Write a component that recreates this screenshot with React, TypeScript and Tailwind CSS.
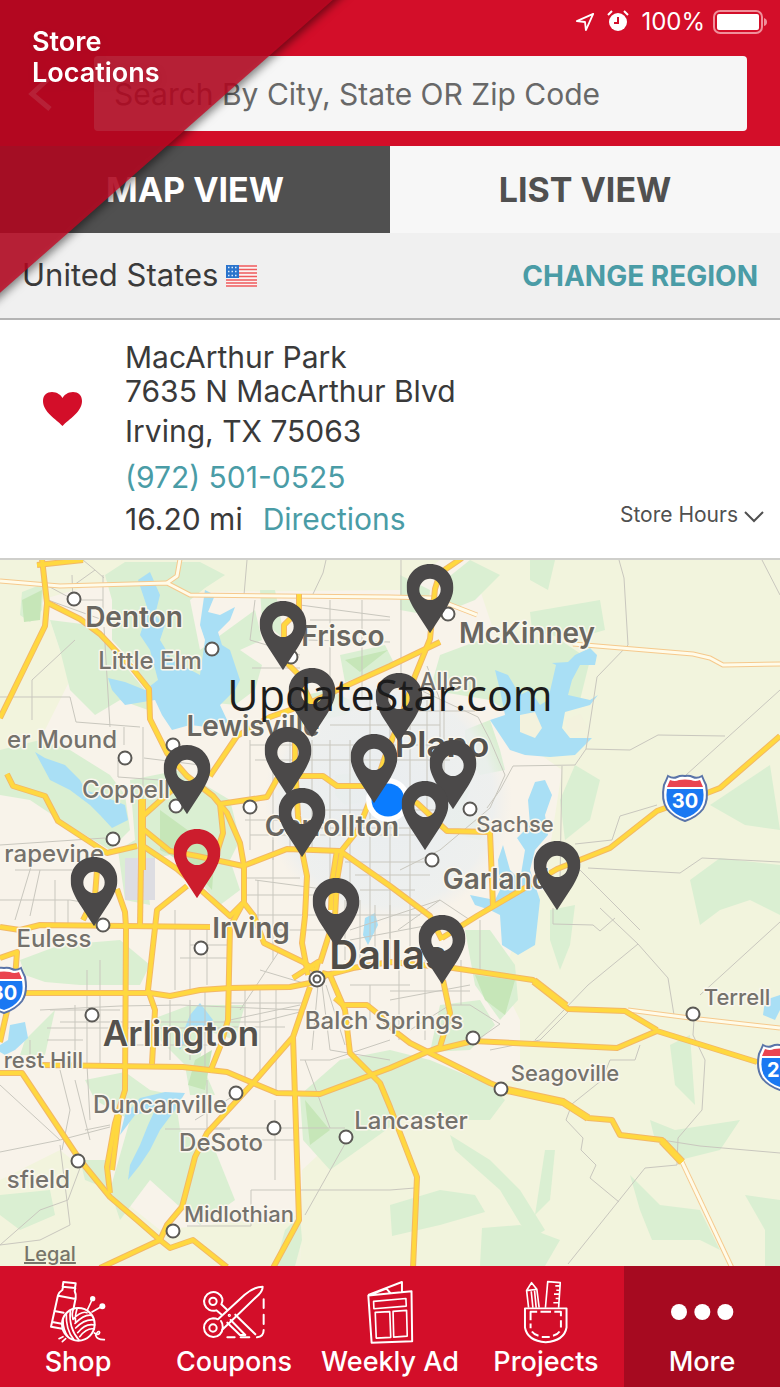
import React from "react";

type Point = [number, number];

/* Map drawing coordinates: x 0..780, y 560..1266 */
const MAP = { x: 0, y: 560, w: 780, h: 706 };

const freeways: string[] = [
  "M42 559 L47 603 L45 626 L0 718",
  "M37 565 L83 560",
  "M48 603 L80 619 L100 634 L133 669 L149 689 L150 719 L167 753 L187 776 L213 796 L227 813 L240 843 L244 866 L244 903 L254 916 L264 943 L303 962 L317 972",
  "M220 804 L223 833 L217 852",
  "M299 594 L299 610 L284 625 L284 660 L297 673 L310 700 L295 740 L295 763 L298 816 L303 856 L307 876 L305 916 L302 943 L308 975",
  "M440 642 L390 666 L350 684 L310 703 L270 717 L237 736 L210 776",
  "M172 790 L143 816 L141 839",
  "M7 774 L13 786 L45 796 L58 821 L107 853 L137 846",
  "M142 799 L140 927",
  "M143 829 L170 851 L197 856 L243 866 L287 849 L340 851 L390 886 L430 916 L442 940",
  "M143 846 L177 869 L193 883 L230 916 L243 903",
  "M187 886 L157 910 L148 990 L155 1010 L152 1064",
  "M243 903 L230 927 L228 1020 L220 1047 L210 1072",
  "M97 870 L95 896 L83 920",
  "M117 889 L125 912 L126 927 L125 1090 L115 1123 L107 1167 L110 1193",
  "M119 1115 L112 1170",
  "M0 927 L20 930 L40 925 L210 927",
  "M0 958 L17 952 L15 978",
  "M7 1011 L0 1042",
  "M24 993 L150 993 L170 996 L200 990 L230 988 L290 987 L310 983 L327 975 L353 968 L390 962 L453 968 L533 980 L568 1009 L625 1011 L657 1030",
  "M40 1065 L183 1067 L227 1072 L253 1083 L277 1093 L320 1094 L390 1068 L427 1052 L473 1041 L617 1048 L657 1031 L757 1062",
  "M0 1073 L22 1073 L80 1160 L110 1197 L137 1220 L160 1240 L170 1248 L193 1240 L227 1267",
  "M160 1240 L100 1268",
  "M310 987 L293 1037 L253 1083 L207 1133 L195 1157 L182 1207 L167 1225 L160 1240",
  "M293 1037 L295 1097 L299 1220 L273 1268",
  "M322 973 L330 975 L345 1010 L350 1053 L380 1083 L390 1107 L417 1177 L413 1268",
  "M335 998 L343 1005 L367 1005 L377 1013 L397 1033 L410 1043 L430 1053 L490 1083 L507 1090 L563 1102 L588 1118 L612 1120 L620 1135 L662 1140 L682 1162",
  "M442 938 L477 916 L523 889 L557 869 L610 848 L657 811 L707 793 L720 788 L780 736",
  "M443 980 L450 1013 L440 1047 L427 1052",
  "M462 558 L440 573 L435 589 L430 639 L415 676 L400 720 L385 757 L374 790 L358 830 L342 850 L337 880 L335 916 L320 963",
  "M337 850 L332 882 L331 910",
  "M220 804 L267 797 L277 779 L300 776 L323 776 L337 786 L377 786 L417 803 L447 831 L490 832 L493 906",
  "M293 978 L318 962 L312 985",
];

const wideStretches: string[] = [
  "M507 1090 L563 1102 L588 1118",
  "M662 1141 L682 1162",
  "M534 981 L566 1006",
  "M142 799 V870",
];

const highways: string[] = [
  "M0 581 L60 586 L167 583 L190 595 L390 597 L433 598 L477 615",
  "M180 559 L177 576 L167 583",
  "M573 644 L693 654 L710 658 L723 665 L780 664",
  "M628 1010 L690 1018 L780 1028",
  "M682 1162 L732 1268",
];

const streets: string[] = [
  "M48 600 L103 620 M72 575 L73 605 M103 575 V612 M48 586 L74 600 L103 600 M104 627 L110 727 M74 585 L95 570 L83 560",
  "M0 697 L70 697 L76 722 L140 727 M95 570 L104 578 M32 720 L32 680 L75 640",
  "M247 560 L244 595 M326 560 L323 573 L313 594 M362 600 V700 M300 605 L390 617 M255 600 L250 640 L300 655 M310 620 H390 M330 600 V690 M305 640 L390 642 M252 668 L300 668 M401 560 V680",
  "M143 727 V800 M124 727 V745 M118 777 L160 780 M144 758 L200 765 M118 760 V777",
  "M250 740 V850 M273 740 V860 M290 740 V850 M312 740 V850 M330 740 V890 M350 740 V900 M370 700 V940 M390 700 V940 M410 700 V930 M427 700 V840 M444 700 V810 M250 745 H430 M255 760 H450 M330 725 H440 M313 810 H440 M318 828 H430 M245 820 H320 M250 835 H420 M345 862 H440 M355 875 H430 M360 890 H415",
  "M390 711 L475 711 M420 690 L478 717 L490 740 L505 775 L490 808 L440 850 L400 870 M427 666 L440 700 V740",
  "M0 845 L105 838 M15 870 H90 M33 860 L15 920 M68 900 V925 M0 900 H70 L100 905 M40 870 L30 916 M55 880 V925",
  "M175 910 V990 M190 930 V990 M207 926 V985 M273 840 V960 M258 880 V930 M245 895 H330 M250 915 H320 M255 880 L330 890 M245 878 H300 M265 930 H325 M180 958 H228 M190 945 H228",
  "M330 915 H420 M345 900 V960 M360 900 V960 M375 905 V960 M390 905 V960 M410 910 V960 M350 940 L430 925 M350 930 L440 900 M398 930 L440 900 L470 920",
  "M87 970 V1065 M75 1005 V1065 M100 960 V1065 M47 1028 H120 M47 1040 H83 M30 1040 V1065 M50 1010 H120 M60 1022 H260 L300 1012 M40 1010 L120 1006 L180 1005 L300 1010 M125 1028 H230 M125 1045 H220 M170 1000 V1060 M190 1000 V1060 M205 990 V1070",
  "M245 990 V1080 M260 990 V1078 M276 990 V1095 M230 1003 H305 M230 1027 H285 M230 1020 L300 1005 M240 1010 L280 950 M260 970 L310 985 M318 985 L312 1050 M322 985 L330 1050 M326 985 L345 1045 M300 1060 L330 1060 L390 1040 M330 1050 L390 1060",
  "M399 960 V1040 M425 960 V1040 M461 960 V1005 M390 991 H470 M390 1000 L470 985 M480 920 V970 M350 985 H410 M370 985 V1020 M410 1030 L450 1005 H470 L500 1024 L470 1045",
  "M60 1145 L70 1225 L40 1240 L0 1245 M60 1070 L70 1110 L62 1150 M75 1080 L90 1140 M0 1085 L60 1140 M110 1125 L85 1130 M87 1065 L90 1120 M165 1129 H230 M207 1080 V1130 M275 1100 V1180 M207 1128 H345 M195 1120 L235 1095 M240 1140 H295 M305 1060 L330 1128 M346 1142 L305 1215 M251 1226 V1190 H390 L415 1188 M187 1226 H251",
  "M80 1168 L68 1200 L40 1210 L0 1245 M0 1152 L60 1140 L110 1127",
  "M619 560 L624 578 L628 645 L597 677 L586 749 L575 765 L513 766 L500 790 L487 808 M586 749 L630 750 L658 735 L725 736 M780 690 L686 775 M657 805 L620 816 L612 840 L575 844 M562 766 L560 880 M588 868 L680 873 L702 858 L780 862 M762 560 L780 595",
  "M600 908 L638 944 L668 978 L674 1015 M553 908 V924 L593 925 L600 931 L615 918 M638 944 L588 985 L535 1040 M780 922 L700 995 M580 870 L640 930",
  "M694 1020 L693 1035 L705 1060 L702 1110 L678 1138 L677 1165 L645 1168 L568 1264 M640 1045 L635 1060 L610 1060 L602 1080 L572 1104 L566 1120 L583 1138 L581 1150 L596 1165 L590 1178 L619 1202 M662 1140 L700 1146 L780 1153",
  "M490 1050 L540 1040 L570 1010",
];

const rural: string[] = [
  "M470 560 H780 V1266 H300 L302 1170 L345 1130 L420 1090 L520 1080 L520 1020 L500 980 L520 930 L545 880 L562 770 L520 740 L500 650 Z",
  "M0 560 H440 L400 590 L190 592 L110 580 L40 600 L50 620 L70 680 L30 760 L0 780 Z",
  "M0 1180 L60 1150 L110 1190 L160 1230 L300 1215 L300 1266 H0 Z",
];

const woods: string[] = [
  "M45 560 L42 610 L30 622 L20 615 L22 592 L40 585 Z",
  "M50 620 L90 625 L120 660 L145 690 L148 710 L120 700 L95 715 L70 690 L60 650 Z",
  "M105 575 L125 562 L200 562 L225 575 L205 588 L190 600 L200 650 L255 610 L262 640 L240 650 L262 665 L255 690 L235 705 L190 700 L150 692 L135 665 L112 640 L112 600 Z",
  "M0 750 L40 740 L70 750 L110 775 L125 795 L130 830 L110 850 L60 820 L30 800 L0 795 Z",
  "M130 780 L180 770 L230 800 L240 840 L230 860 L240 890 L220 905 L190 870 L170 855 L145 860 L150 905 L125 900 L118 850 L135 840 Z",
  "M260 590 L275 590 L285 640 L262 620 Z",
  "M340 655 L385 645 L395 665 L345 682 Z",
  "M305 695 L330 690 L360 705 L345 715 L320 720 Z",
  "M400 575 L430 590 L428 615 L400 610 Z",
  "M440 655 L480 640 L560 640 L590 660 L580 700 L520 720 L490 700 L430 690 Z",
  "M470 560 L500 575 L475 600 L450 610 L445 580 Z",
  "M530 560 H555 L548 590 L530 580 Z",
  "M530 612 L600 600 L605 630 L570 640 L532 630 Z",
  "M575 765 L600 780 L590 820 L565 840 L560 800 Z",
  "M465 730 L490 720 L500 750 L505 770 L480 775 L465 755 Z",
  "M440 780 L470 790 L460 815 L490 825 L480 840 L440 830 Z",
  "M335 775 L385 770 L380 800 L345 805 L335 795 Z",
  "M20 960 L60 945 L120 940 L150 965 L140 985 L80 985 L45 982 L25 975 Z",
  "M150 1020 L190 1005 L245 1005 L235 1040 L205 1030 L200 1060 L215 1095 L190 1095 L185 1065 L160 1040 Z",
  "M85 1080 L125 1072 L150 1090 L175 1095 L180 1130 L215 1150 L235 1200 L200 1225 L150 1180 L120 1220 L110 1190 L130 1120 L95 1100 Z",
  "M300 1095 L340 1060 L390 1050 L430 1060 L490 1085 L505 1100 L490 1120 L400 1120 L330 1170 L303 1140 Z",
  "M465 930 L490 930 L515 965 L518 1000 L500 1020 L475 985 Z",
  "M440 1005 L480 1000 L495 1025 L470 1050 L430 1052 Z",
  "M25 1040 L55 1010 L45 1055 L20 1055 Z",
  "M0 1195 L50 1190 L55 1215 L20 1230 L0 1215 Z",
  "M80 1160 L105 1160 L110 1190 L85 1180 Z",
  "M550 910 L575 905 L570 945 L560 970 L550 940 Z",
  "M710 805 L770 765 L780 830 L745 825 Z",
  "M690 880 L720 858 L780 865 V915 L750 900 L720 910 L700 925 Z",
  "M670 1045 L690 1035 L695 1105 L675 1085 Z",
  "M650 1120 L675 1130 L740 1120 L720 1150 L680 1160 L655 1140 Z",
  "M390 1205 L440 1190 L475 1195 L485 1212 L440 1225 L392 1236 Z",
  "M482 1228 L520 1225 L560 1240 L545 1266 H480 Z",
  "M450 1135 L490 1160 L520 1190 L545 1230 L530 1240 L500 1190 L455 1150 Z",
  "M630 1175 L660 1205 L700 1210 L720 1250 L700 1240 H652 L640 1210 Z",
  "M745 1195 L780 1200 V1266 H765 L765 1230 Z",
  "M285 1230 L300 1215 L302 1240 L295 1266 H275 Z",
  "M545 1150 L555 1150 L550 1200 L535 1215 Z",
];

const lakes: string[] = [
  "M138 580 L150 572 L160 595 L155 615 L165 625 L160 640 L172 660 L200 675 L205 640 L200 625 L205 590 L215 595 L208 612 L220 615 L235 607 L230 620 L218 632 L222 645 L230 650 L240 680 L235 690 L220 705 L228 722 L215 728 L190 725 L172 730 L162 715 L155 700 L125 705 L112 690 L108 678 L125 682 L145 690 L158 680 L150 650 L140 635 L148 610 Z",
  "M35 752 L45 758 L65 765 L80 780 L85 790 L105 797 L125 805 L128 820 L112 828 L100 815 L90 805 L70 790 L50 780 Z",
  "M495 670 L508 675 L520 695 L530 690 L540 705 L548 700 L556 665 L552 663 L568 662 L575 655 L590 648 L597 655 L595 665 L580 665 L572 680 L568 695 L590 700 L598 695 L590 705 L565 712 L562 728 L570 738 L592 738 L575 755 L550 757 L525 755 L510 750 L500 735 L490 720 L505 715 L500 690 Z",
  "M535 782 L545 780 L552 795 L545 815 L548 835 L535 850 L530 870 L540 900 L535 945 L518 955 L502 945 L500 915 L490 910 L475 905 L470 895 L495 900 L500 890 L498 860 L503 845 L510 870 L520 880 L525 850 L517 838 L530 825 L528 800 Z",
  "M10 1025 L25 1022 L28 1038 L15 1050 L5 1055 L0 1052 V1045 L8 1040 Z",
  "M190 1015 L200 1003 L213 1020 L205 1030 L195 1025 L180 1050 L178 1045 Z",
  "M140 1098 L165 1092 L185 1093 L175 1110 L160 1130 L150 1150 L140 1165 L128 1180 L130 1165 L140 1145 L148 1125 L155 1110 L135 1115 L120 1135 L125 1115 Z",
  "M365 918 L375 913 L378 925 L368 945 L363 935 Z",
  "M765 1000 L780 995 V1010 L775 1020 L763 1015 Z",
];

const towns: Point[] = [
  [74, 599], [212, 649], [448, 614], [125, 758], [173, 745], [176, 806], [250, 807], [470, 809],
  [113, 839], [432, 860], [103, 925], [201, 948], [92, 1015], [473, 1038], [501, 1089], [236, 1093],
  [274, 1128], [346, 1137], [78, 1161], [173, 1231], [693, 1014], [291, 657],
];

type Label = { t: string; x: number; y: number; s: "xl" | "lg" | "ml" | "md" | "sm"; end?: boolean };

const labels: Label[] = [
  { t: "Denton", x: 134, y: 627, s: "ml" },
  { t: "Frisco", x: 343, y: 646, s: "ml" },
  { t: "McKinney", x: 527, y: 643, s: "ml" },
  { t: "Little Elm", x: 150, y: 669, s: "md" },
  { t: "Allen", x: 448, y: 690, s: "md" },
  { t: "Lewisville", x: 253, y: 736, s: "ml" },
  { t: "er Mound", x: 117, y: 748, s: "md", end: true },
  { t: "Plano", x: 442, y: 757, s: "lg" },
  { t: "Coppell", x: 126, y: 798, s: "md" },
  { t: "Carrollton", x: 332, y: 836, s: "ml" },
  { t: "Sachse", x: 515, y: 832, s: "sm" },
  { t: "rapevine", x: 104, y: 862, s: "md", end: true },
  { t: "Garland", x: 496, y: 889, s: "ml" },
  { t: "Irving", x: 251, y: 938, s: "ml" },
  { t: "Euless", x: 54, y: 947, s: "md" },
  { t: "Dallas", x: 388, y: 969, s: "xl" },
  { t: "Arlington", x: 181, y: 1046, s: "lg" },
  { t: "Balch Springs", x: 384, y: 1029, s: "md" },
  { t: "rest Hill", x: 83, y: 1068, s: "sm", end: true },
  { t: "Terrell", x: 737, y: 1005, s: "sm" },
  { t: "Seagoville", x: 565, y: 1081, s: "sm" },
  { t: "Duncanville", x: 160, y: 1113, s: "md" },
  { t: "Lancaster", x: 411, y: 1129, s: "md" },
  { t: "DeSoto", x: 221, y: 1151, s: "md" },
  { t: "sfield", x: 70, y: 1188, s: "md", end: true },
  { t: "Midlothian", x: 239, y: 1222, s: "sm" },
];

const labelClass: Record<Label["s"], string> = {
  xl: "fill-[#4f4c47] text-[40px] font-semibold",
  lg: "fill-[#55524d] text-[35px] font-semibold",
  ml: "fill-[#696660] text-[28px] font-semibold",
  md: "fill-[#75726c] text-[24px] font-medium",
  sm: "fill-[#75726c] text-[22px] font-medium",
};

/* Pin tops, listed back to front */
const pins: { x: number; y: number; mine?: boolean }[] = [
  { x: 430, y: 564 }, { x: 283, y: 601 }, { x: 312, y: 668 }, { x: 399, y: 673 },
  { x: 288, y: 727 }, { x: 374, y: 734 }, { x: 453, y: 740 }, { x: 187, y: 745 },
  { x: 425, y: 781 }, { x: 302, y: 788 }, { x: 197, y: 829, mine: true }, { x: 557, y: 841 },
  { x: 94, y: 857 }, { x: 336, y: 878 }, { x: 442, y: 915 },
];

function Shield({ x, y, n }: { x: number; y: number; n: string }) {
  return (
    <g transform={`translate(${x} ${y})`}>
      <path d="M-17 -22 Q-12 -19 -8 -21 Q-4 -23 0 -22 Q4 -23 8 -21 Q12 -19 17 -22 Q19 -17 21 -13 Q24 2 18 11 Q12 19 0 23 Q-12 19 -18 11 Q-24 2 -21 -13 Q-19 -17 -17 -22 Z" fill="#fff" stroke="#5a74a8" strokeWidth="2" />
      <path d="M-18 -9 H18 Q20 3 15 10 Q10 17 0 20 Q-10 17 -15 10 Q-20 3 -18 -9 Z" fill="#1a78f2" />
      <path d="M-15 -18 Q-10 -16 -6 -18 Q0 -19 6 -18 Q10 -16 15 -18 L18 -11 H-18 Z" fill="#ea4450" />
      <text x="0" y="10" textAnchor="middle" className="fill-white text-[20px] font-bold">{n}</text>
    </g>
  );
}

function MapCanvas() {
  return (
    <svg viewBox={`${MAP.x} ${MAP.y} ${MAP.w} ${MAP.h}`} className="block w-full bg-[#f8f3ea]" role="img" aria-label="Map of stores around Dallas">
      <defs>
        <radialGradient id="halo">
          <stop offset="0" stopColor="#e9edf0" />
          <stop offset="0.85" stopColor="#ecefef" stopOpacity="0.85" />
          <stop offset="1" stopColor="#eeeeec" stopOpacity="0" />
        </radialGradient>
      </defs>
      <g fill="#f2f4dd">{rural.map((d) => <path key={d} d={d} />)}</g>
      <g fill="#daefd2">{woods.map((d) => <path key={d} d={d} />)}</g>
      <g fill="#c6e6b8">
        <path d="M22 600 L42 590 L40 620 L24 622 Z M160 810 L215 850 L212 890 L190 865 L160 850 Z M345 660 L388 650 L360 672 Z M195 1060 L212 1050 L205 1090 L188 1085 Z M475 975 L515 980 L505 1015 L485 1000 Z M305 1100 L330 1130 L310 1145 Z" />
      </g>
      <path d="M125 858 H155 V900 H125 Z" fill="#dddde2" />
      <circle cx="388" cy="800" r="124" fill="url(#halo)" />
      <g fill="#a9dff5">{lakes.map((d) => <path key={d} d={d} />)}</g>
      <g fill="#f3f2dd">
        <path d="M520 715 L535 712 L542 728 L535 738 L520 732 Z M565 720 L580 714 L588 728 L568 735 Z" />
      </g>
      <g fill="none" stroke="#c9c7be" strokeWidth="1">{streets.map((d) => <path key={d} d={d} />)}</g>
      <g fill="none" strokeLinejoin="round">
        <g stroke="#f6c98c" strokeWidth="5">{highways.map((d) => <path key={d} d={d} />)}</g>
        <g stroke="#fffbe9" strokeWidth="3">{highways.map((d) => <path key={d} d={d} />)}</g>
        <g stroke="#f3b866" strokeWidth="6">{freeways.map((d) => <path key={d} d={d} />)}</g>
        <g stroke="#f3b866" strokeWidth="8">{wideStretches.map((d) => <path key={d} d={d} />)}</g>
        <g stroke="#ffd83f" strokeWidth="6">{wideStretches.map((d) => <path key={d} d={d} />)}</g>
        <g stroke="#ffd83f" strokeWidth="4">{freeways.map((d) => <path key={d} d={d} />)}</g>
      </g>
      <Shield x={685} y={798} n="30" />
      <Shield x={4} y={990} n="30" />
      <Shield x={780} y={1067} n="20" />
      <g fill="#fff" stroke="#5b5955" strokeWidth="2">
        {towns.map(([x, y]) => <circle key={`${x}-${y}`} cx={x} cy={y} r="6.500" />)}
        <circle cx="317" cy="979" r="7.500" />
        <circle cx="317" cy="979" r="3.500" />
      </g>
      <g className="[paint-order:stroke] stroke-[#faf7ee] stroke-3 [stroke-linejoin:round]">
        {labels.map((l) => (
          <text key={l.t} x={l.x} y={l.y} textAnchor={l.end ? "end" : "middle"} className={labelClass[l.s]}>{l.t}</text>
        ))}
      </g>
      <circle cx="388" cy="800" r="22" fill="#fff" />
      <circle cx="388" cy="800" r="16.500" fill="#0a7cff" />
    </svg>
  );
}

function Pin({ x, y, mine }: { x: number; y: number; mine?: boolean }) {
  return (
    <button
      type="button"
      aria-label={mine ? "My store" : "Store"}
      className={`absolute w-[6%] -translate-x-1/2 ${mine ? "text-[#cc1d2d]" : "text-[#4b4949]"}`}
      style={{ left: `${(x / MAP.w) * 100}%`, top: `${((y - MAP.y) / MAP.h) * 100}%` }}
    >
      <svg viewBox="0 0 46 68" className="block w-full" fill="currentColor">
        <path fillRule="evenodd" d="M23 0 C36 0 46 10 46 23 C46 31 42 38 38 45 L23 68 L8 45 C4 38 0 31 0 23 C0 10 10 0 23 0 Z M23 14.500 A10.500 10.500 0 1 0 23 35.500 A10.500 10.500 0 1 0 23 14.500 Z" />
      </svg>
    </button>
  );
}

const ShopIcon = () => (
  <svg viewBox="145 40 180 192" className="h-16" fill="none" stroke="#fff" strokeWidth="6" strokeLinejoin="round" strokeLinecap="round">
    <path d="M191 46 L228 50 L226 64 L189 60 Z M190 61 L188 70 Q178 76 175 86 L154 180 L188 186 M227 65 L225 73 Q230 84 228 94 L222 124 M176 87 L228 97 M164 133 L192 138 M158 166 L186 171" />
    <circle cx="236" cy="173" r="49" />
    <path d="M200 140 Q198 190 222 218 M212 130 Q206 185 238 220 M222 126 Q215 140 220 158 M232 126 Q225 150 228 166 M220 158 Q245 132 262 138 M226 170 Q255 142 275 146 M228 184 Q255 156 283 160 M234 198 Q258 168 285 175 M240 210 Q262 182 284 187 M190 160 Q190 190 205 210" strokeWidth="5" />
    <path d="M263 130 L277 100 M277 136 L303 121 M284 199 Q298 208 300 198 Q296 188 288 206 Q292 220 314 219 M190 210 L178 216 M198 216 L188 225" strokeWidth="5" />
    <circle cx="279" cy="96" r="8" fill="#fff" stroke="none" />
    <circle cx="308" cy="119" r="9" fill="#fff" stroke="none" />
  </svg>
);

const CouponsIcon = () => (
  <svg viewBox="605 40 200 192" className="h-16" fill="none" stroke="#fff" strokeWidth="6" strokeLinejoin="round" strokeLinecap="round">
    <path d="M665 163 Q671 171 670 184 A28 28 0 1 1 641 155 Q650 155 656 158 L736 84 Q765 60 790 60 Q790 72 778 84 L668 190" />
    <path d="M684 130 L666 113 Q671 103 669 96 A28 28 0 1 0 651 131 L668 145" />
    <circle cx="641" cy="104" r="11" />
    <circle cx="641" cy="184" r="11" />
    <circle cx="690" cy="146" r="2" />
    <path d="M684 168 L722 205 L738 205 L694 160 M708 144 L768 203 M793 98 V124 M793 144 V172 M793 190 Q793 210 773 212 M684 212 H706 M724 212 H750" />
  </svg>
);

const WeeklyIcon = () => (
  <svg viewBox="166 40 148 194" className="h-16" fill="none" stroke="#fff" strokeWidth="6" strokeLinejoin="round">
    <path d="M173 87 L304 74 L306 226 L183 230 Z M173 85 L275 46 V76 M173 87 L228 66 L240 80" />
    <path d="M189 105 L287 96 L288 119 L190 127 Z M194 138 L238 136 L241 214 L197 216 Z M248 135 L289 132 L291 210 L250 213 Z" strokeWidth="5" />
  </svg>
);

const ProjectsIcon = () => (
  <svg viewBox="636 40 144 194" className="h-16" fill="none" stroke="#fff" strokeWidth="6" strokeLinejoin="round">
    <path d="M645 126 H771 V184 Q764 224 708 229 Q652 224 645 184 Z" />
    <path d="M656 124 L650 72 L665 48 L681 68 L688 124 M650 72 L681 68 M664 74 L669 124 M674 72 L679 124 M707 124 L714 45 L752 48 L747 124 M751 58 H737 M750 71 H740 M749 83 H733 M748 96 H738 M747 109 H731" strokeWidth="5" />
    <path d="M662 162 V136 H682 M692 136 H724 M734 136 H754 V150 M754 162 V184 M750 196 Q744 205 730 209 M720 213 H696 M686 209 Q672 205 666 196 M662 186 V172" />
  </svg>
);

const MoreIcon = () => (
  <svg viewBox="1082 40 192 192" className="h-16" fill="#fff">
    <circle cx="1109" cy="136" r="24" />
    <circle cx="1179" cy="136" r="24" />
    <circle cx="1248" cy="136" r="24" />
  </svg>
);

const navItems = [
  { label: "Shop", Icon: ShopIcon },
  { label: "Coupons", Icon: CouponsIcon },
  { label: "Weekly Ad", Icon: WeeklyIcon },
  { label: "Projects", Icon: ProjectsIcon },
  { label: "More", Icon: MoreIcon, active: true },
];

function StatusBar() {
  return (
    <div className="flex h-14 items-start justify-end gap-3 pt-2 pr-3 text-white">
      <svg viewBox="0 0 22 22" className="mt-1 h-5 w-5" fill="none" stroke="currentColor" strokeWidth="2" strokeLinejoin="round">
        <path d="M20 2 L2 10 L11 11 L12 20 Z" />
      </svg>
      <svg viewBox="0 0 22 22" className="mt-0.5 h-[22px] w-[22px]" fill="none">
        <circle cx="11" cy="12" r="9" fill="currentColor" />
        <path d="M1 5 L5 1 M21 5 L17 1" stroke="currentColor" strokeWidth="2" />
        <path d="M11 7 V13 H7" stroke="#d30e29" strokeWidth="2" />
      </svg>
      <span className="text-[24px] leading-7">100%</span>
      <svg viewBox="0 0 55 24" className="-ml-1 mt-0.5 h-6 w-[55px]" fill="none">
        <rect x="1" y="1" width="48" height="22" rx="6" stroke="#f0909b" strokeWidth="2" />
        <rect x="4" y="4" width="42" height="16" rx="2" fill="#fff" />
        <path d="M51 8 Q54 9 54 12 Q54 15 51 16 Z" fill="#f0909b" />
      </svg>
    </div>
  );
}

function Flag() {
  return (
    <svg viewBox="0 0 31 22" className="h-[22px] w-[31px]" role="img" aria-label="US flag">
      <rect width="31" height="22" fill="#fbf3f2" />
      <path d="M0 1 H31 M0 4.500 H31 M0 8 H31 M0 11.500 H31 M0 15 H31 M0 18 H31 M0 21 H31" stroke="#ee5a5c" strokeWidth="1.700" />
      <rect width="13" height="13" fill="#2b74cc" />
      <path d="M2 2.500 H12 M2 6.500 H12 M2 10.500 H12" stroke="#dcebfa" strokeWidth="1.500" strokeDasharray="1.500 2" />
    </svg>
  );
}

export default function App() {
  return (
    <div className="relative flex flex-col overflow-hidden bg-white font-['Inter',sans-serif] text-[#3a3a3a]">
      <header className="bg-[#d30e29] pb-[15px]">
        <StatusBar />
        <div className="flex h-[75px] items-center pr-[33px] pl-7">
          <button type="button" aria-label="Back" className="w-[66px]">
            <svg viewBox="0 0 24 34" className="h-[34px] w-6" fill="none" stroke="#fff" strokeWidth="5">
              <path d="M20 2 L4 17 L22 32" />
            </svg>
          </button>
          <input
            type="text"
            aria-label="Search by city, state or zip code"
            placeholder="Search By City, State OR Zip Code"
            className="h-full min-w-0 flex-1 rounded-[4px] bg-[#f6f6f6] px-5 text-[30px] placeholder:text-[#686868]"
          />
        </div>
      </header>

      <div role="tablist" className="grid h-[87px] grid-cols-2 text-[34px] font-bold">
        <button type="button" role="tab" aria-selected="true" className="bg-[#505050] text-white">MAP VIEW</button>
        <button type="button" role="tab" aria-selected="false" className="bg-[#f7f7f7] text-[#505050]">LIST VIEW</button>
      </div>

      <div className="flex h-[87px] items-center justify-between border-b-2 border-[#b4b4b4] bg-[#f0f0f0] px-[22px]">
        <div className="flex items-center gap-2 text-[31px]">
          <span>United States</span>
          <Flag />
        </div>
        <button type="button" className="text-[28px] font-bold text-[#4a9ca6]">CHANGE REGION</button>
      </div>

      <section className="flex h-[240px] border-b-2 border-[#cfcfcb] bg-white pt-5">
        <div className="w-[125px] shrink-0 pt-[52px] pl-[43px]">
          <button type="button" aria-label="Favorite store" className="block">
            <svg viewBox="0 0 39 34" className="h-[34px] w-[39px]" fill="#d30e29">
              <path d="M19.500 34 C13 27 0 20 0 9 C0 3 4 0 9 0 C14 0 18 3 19.500 6 C21 3 25 0 30 0 C35 0 39 3 39 9 C39 20 26 27 19.500 34 Z" />
            </svg>
          </button>
        </div>
        <div className="flex flex-1 flex-col items-start text-[30px] leading-[34px]">
          <p>MacArthur Park</p>
          <p>7635 N MacArthur Blvd</p>
          <p className="mt-1.5">Irving, TX 75063</p>
          <a href="tel:+19725010525" className="mt-3 text-[#4a9ca6]">(972) 501-0525</a>
          <div className="mt-2 flex w-full items-center justify-between pr-4">
            <div className="flex gap-5">
              <span>16.20 mi</span>
              <a href="#directions" className="text-[#4a9ca6]">Directions</a>
            </div>
            <button type="button" className="-mt-2 flex items-center gap-1.5 text-[21px] text-[#505050]">
              Store Hours
              <svg viewBox="0 0 20 12" className="mt-1 h-3 w-5" fill="none" stroke="currentColor" strokeWidth="2">
                <path d="M1 1 L10 10 L19 1" />
              </svg>
            </button>
          </div>
        </div>
      </section>

      <main className="relative">
        <MapCanvas />
        {pins.map((p) => <Pin key={`${p.x}-${p.y}`} {...p} />)}
        <a href="#legal" className="absolute bottom-0 left-6 text-[20px] leading-6 font-medium text-[#77756a] underline">Legal</a>
      </main>

      <nav className="grid h-[121px] grid-cols-5 bg-[#d30e29] text-[27px] leading-[30px] font-medium text-white">
        {navItems.map(({ label, Icon, active }) => (
          <button key={label} type="button" className={`flex flex-col items-center gap-[3px] pt-3.5 ${active ? "bg-[#a60a20]" : ""}`}>
            <Icon />
            <span className="whitespace-nowrap">{label}</span>
          </button>
        ))}
      </nav>

      <div className="pointer-events-none absolute -top-6 -left-6 drop-shadow-[2px_3px_4px_rgba(0,0,0,0.6)]">
        <h1 className="h-[338px] w-[384px] bg-[#c30823]/80 pt-[50px] pl-14 text-[27px] leading-[31px] font-semibold text-white [clip-path:polygon(0_0,100%_0,0_100%)]">
          Store
          <br />
          Locations
        </h1>
      </div>

      <p className="pointer-events-none absolute inset-0 flex items-center justify-center pt-1 font-['Open_Sans',sans-serif] text-[43px] text-[#1c1c1c]">UpdateStar.com</p>
    </div>
  );
}
